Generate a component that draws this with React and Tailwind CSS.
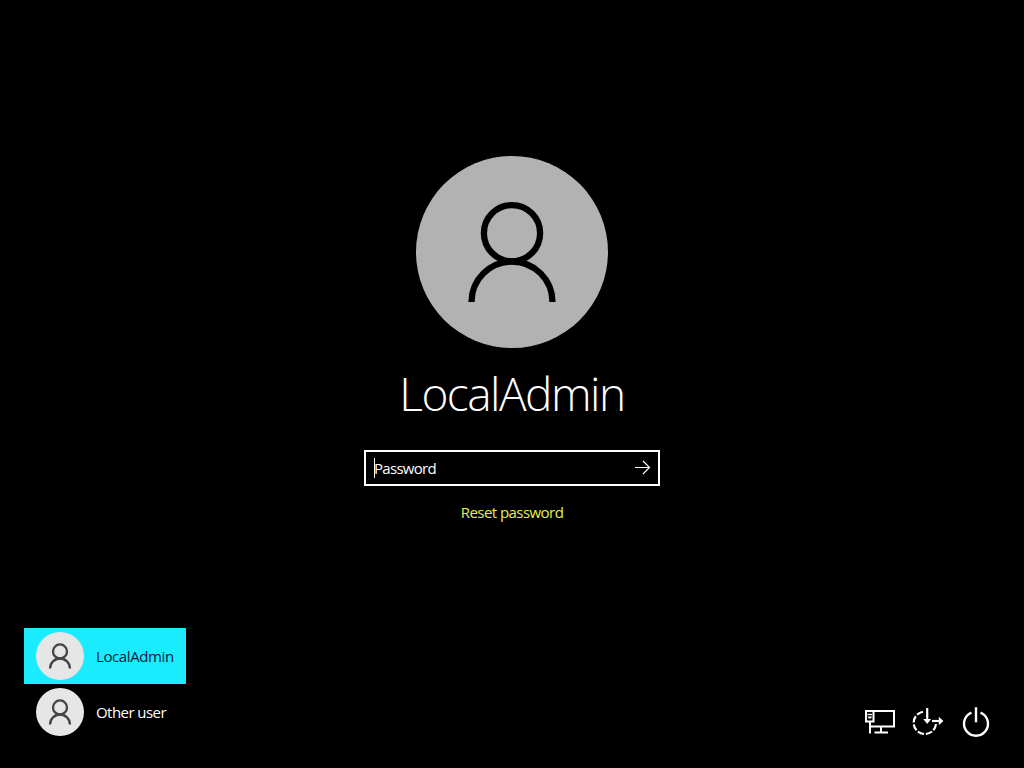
import clsx from 'clsx';

const users = [
    { name: 'LocalAdmin', active: true },
    { name: 'Other user', active: false },
];

function PersonLarge() {
    return (
        <svg className="w-48 h-48" viewBox="0 0 192 192" fill="none" stroke="#000" strokeWidth={6.3}>
            <circle cx="96" cy="77.2" r="28.1" />
            <path d="M55.5 146a40.5 40.5 0 0 1 81 0" />
        </svg>
    );
}

function PersonSmall() {
    return (
        <svg className="w-12 h-12" viewBox="0 0 48 48" fill="none" stroke="#444" strokeWidth={2.3}>
            <circle cx="24" cy="19.4" r="7" />
            <path d="M14.1 36.4a9.9 9.9 0 0 1 19.8 0" />
        </svg>
    );
}

function NetworkIcon() {
    return (
        <svg className="w-8 h-8" viewBox="0 0 32 32" fill="none" stroke="#fff" strokeWidth={2}>
            <path d="M1 5h29v15.5H6" />
            <path d="M2 4v11.5h7.5V5M6 15v12.5" />
            <path d="M3.5 8.5h4.5" strokeWidth={1.4} />
            <path d="M3.5 10.5h4.6l-1.1 2h-2.4z" fill="#fff" stroke="none" />
            <path d="M17 21v5M10.5 26.5h13.5" />
        </svg>
    );
}

function EaseOfAccessIcon() {
    return (
        <svg className="w-8 h-8" viewBox="0 0 32 32" fill="none" stroke="#fff" strokeWidth={2.2}>
            <path d="M24 18.2A11.2 11.2 0 1 1 11.5 5.7" strokeDasharray="6.6 1.9" />
            <path d="M15.2 2v14" />
            <path d="M11.3 13h7.8l-3.9 5z" fill="#fff" stroke="none" />
            <path d="M20 15h8.5" />
            <path d="M26.8 10.8v8.4l4.6-4.2z" fill="#fff" stroke="none" />
        </svg>
    );
}

function PowerIcon() {
    return (
        <svg className="w-8 h-8" viewBox="0 0 32 32" fill="none" stroke="#fff" strokeWidth={2.4}>
            <path d="M11.5 6.6A12 12 0 1 0 20.5 6.6" />
            <path d="M16 1.3v15" />
        </svg>
    );
}

export default function App() {
    return (
        <div className="w-[1024px] h-[768px] overflow-hidden bg-black text-white font-['Open_Sans','Noto_Sans',sans-serif] flex flex-col">
            {/* Sign-in form */}
            <main className="h-[628px] pt-[156px] flex flex-col items-center">
                <div className="w-48 h-48 rounded-full bg-[#b2b2b2]">
                    <PersonLarge />
                </div>
                <h1 className="mt-3.5 h-[62px] text-[46px] leading-[62px] font-light tracking-[-1.5px] whitespace-nowrap">
                    LocalAdmin
                </h1>
                <div className="mt-[26px] w-[296px] h-9 border-2 border-white flex items-center justify-between pl-2 pr-[7px]">
                    <div className="h-5 flex items-start">
                        <span className="w-px h-5 bg-white" />
                        <span className="-ml-px text-[15px] leading-5 tracking-[-0.7px]">Password</span>
                    </div>
                    <button aria-label="Submit">
                        <svg className="w-4 h-4" viewBox="0 0 16 16" fill="none" stroke="#fff" strokeWidth={1.2}>
                            <path d="M0 7.5h14.5M8 1l6.5 6.5L8 14" />
                        </svg>
                    </button>
                </div>
                <a className="mt-4 text-[15px] leading-5 tracking-[-0.55px] text-[#e6f04a]">Reset password</a>
            </main>

            {/* User list and system buttons */}
            <footer className="h-28 pl-6 pr-8 flex justify-between">
                <ul>
                    {users.map((user) => (
                        <li
                            key={user.name}
                            className={clsx(
                                'w-[162px] h-14 pl-3 flex items-center gap-3 text-[15px] whitespace-nowrap',
                                user.active
                                    ? 'bg-[#1aebff] text-[#0a2040] tracking-[-0.4px]'
                                    : 'text-white tracking-[-0.55px]'
                            )}
                        >
                            <span className="w-12 h-12 shrink-0 rounded-full bg-[#e6e6e6]">
                                <PersonSmall />
                            </span>
                            <span>{user.name}</span>
                        </li>
                    ))}
                </ul>
                <div className="flex items-end gap-4 pb-0.5">
                    <NetworkIcon />
                    <EaseOfAccessIcon />
                    <PowerIcon />
                </div>
            </footer>
        </div>
    );
}
